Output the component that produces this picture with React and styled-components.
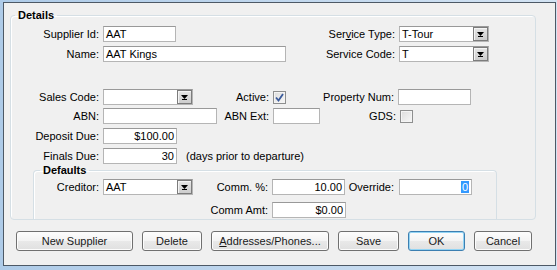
import React from 'react'
import styled, { createGlobalStyle } from 'styled-components'

const GlobalStyle = createGlobalStyle`
  html, body {
    margin: 0;
    padding: 0;
  }
  body {
    font-family: 'Liberation Sans', Arial, sans-serif;
    font-size: 11px;
    color: #000;
  }
`

const Screen = styled.div`
  width: 557px;
  height: 270px;
  box-sizing: border-box;
  padding: 2px 1px 4px 3px;
  background: linear-gradient(90deg, #aecbe8, #d3e3f3);
`

const Window = styled.div`
  height: 100%;
  box-sizing: border-box;
  display: flex;
  flex-direction: column;
  padding: 6px 0 0 6px;
  background: #f0f0f0;
  border: 1px solid #4d5966;
`

const GroupBox = styled.fieldset`
  margin: 0 0 0 ${(p) => p.$indent || 0}px;
  width: ${(p) => p.$w}px;
  box-sizing: border-box;
  padding: ${(p) => p.$pad || '0'};
  border: 1px solid #d5dfe5;
  border-bottom: ${(p) => (p.$open ? 'none' : '1px solid #d5dfe5')};
  border-radius: ${(p) => (p.$open ? '4px 4px 0 0' : '4px')};
  box-shadow: inset 1px 1px 0 #fff;
  display: flex;
  flex-direction: column;
`

const Legend = styled.legend`
  margin-left: ${(p) => p.$offset}px;
  padding: 0 3px;
  font-weight: bold;
  line-height: 13px;
`

const Row = styled.div`
  display: flex;
  align-items: center;
  height: 16px;
  margin-top: ${(p) => p.$mt || 0}px;
`

const Label = styled.div`
  flex: none;
  width: ${(p) => p.$w}px;
  box-sizing: border-box;
  padding-right: ${(p) => p.$gap || 4}px;
  text-align: right;
  white-space: nowrap;
`

const TextBox = styled.div`
  flex: none;
  width: ${(p) => p.$w}px;
  height: 16px;
  box-sizing: border-box;
  padding: 0 2px;
  display: flex;
  align-items: center;
  justify-content: ${(p) => (p.$right ? 'flex-end' : 'flex-start')};
  background: #fff;
  border: 1px solid #b5b5b5;
  border-top-color: #999;
  white-space: nowrap;
  overflow: hidden;
`

const Selected = styled.span`
  background: #3399ff;
  color: #fff;
  padding: 0 1px;
  line-height: 12px;
`

const ComboBox = styled.div`
  flex: none;
  width: ${(p) => p.$w}px;
  height: 16px;
  box-sizing: border-box;
  display: flex;
  align-items: stretch;
  background: #fff;
  border: 1px solid #b5b5b5;
  border-top-color: #999;
`

const ComboText = styled.div`
  flex: 1;
  display: flex;
  align-items: center;
  padding-left: 2px;
`

const DropButton = styled.div`
  flex: none;
  width: 15px;
  box-sizing: border-box;
  margin: 0 0 0 0;
  display: flex;
  align-items: center;
  justify-content: center;
  background: linear-gradient(#e6e6e6, #cdcdcd);
  border: 1px solid #7c7c7c;
  box-shadow: inset 1px 1px 0 #f4f4f4;
`

const CheckBox = styled.div`
  flex: none;
  width: 13px;
  height: 13px;
  box-sizing: border-box;
  display: flex;
  align-items: center;
  justify-content: center;
  border: 1px solid #8e8f8f;
  background: linear-gradient(135deg, #dcdcdc, #f8f8f8);
  box-shadow: inset 0 0 0 1px #f4f4f4;
`

const Note = styled.div`
  margin-left: 9px;
  white-space: nowrap;
`

const ButtonBar = styled.div`
  display: flex;
  gap: 9px;
  margin-top: 11px;
  padding-left: 6px;
`

const Button = styled.div`
  flex: none;
  width: ${(p) => p.$w}px;
  height: 20px;
  box-sizing: border-box;
  display: flex;
  align-items: center;
  justify-content: center;
  border: 1px solid ${(p) => (p.$focus ? '#3c7fb1' : '#707070')};
  border-radius: 3px;
  background: linear-gradient(#fdfdfd, #f3f3f3 50%, #e9e9e9 50%, #e0e0e0);
  box-shadow: inset 0 0 0 1px ${(p) => (p.$focus ? '#93d4f4' : '#fcfcfc')};
  color: #1a1a1a;
`

const Arrow = () => (
  <svg width="7" height="5" viewBox="0 0 7 5">
    <polygon points="0,0 7,0 3.5,4" fill="#000" />
    <rect x="1" y="4" width="5" height="1" fill="#000" />
  </svg>
)

const Check = () => (
  <svg width="9" height="9" viewBox="0 0 9 9">
    <path d="M1 4.5 L3.5 7.5 L8 1" fill="none" stroke="#3b5b9b" strokeWidth="1.8" />
  </svg>
)

const Combo = ({ w, value }) => (
  <ComboBox $w={w}>
    <ComboText>{value}</ComboText>
    <DropButton>
      <Arrow />
    </DropButton>
  </ComboBox>
)

export default function App() {
  return (
    <>
      <GlobalStyle />
      <Screen>
        <Window>
          <GroupBox $w={526} $pad="4px 0 0 0">
            <Legend $offset={4}>Details</Legend>
            <Row>
              <Label $w={92}>Supplier Id:</Label>
              <TextBox $w={73}>AAT</TextBox>
              <Label $w={223}>
                Ser<u>v</u>ice Type:
              </Label>
              <Combo w={90} value="T-Tour" />
            </Row>
            <Row $mt={4}>
              <Label $w={92}>Name:</Label>
              <TextBox $w={183}>AAT Kings</TextBox>
              <Label $w={113}>Service Code:</Label>
              <Combo w={90} value="T" />
            </Row>
            <Row $mt={27}>
              <Label $w={92}>Sales Code:</Label>
              <Combo w={90} value="" />
              <Label $w={80}>Active:</Label>
              <CheckBox>
                <Check />
              </CheckBox>
              <Label $w={112}>Property Num:</Label>
              <TextBox $w={73} />
            </Row>
            <Row $mt={3}>
              <Label $w={92}>ABN:</Label>
              <TextBox $w={114} />
              <Label $w={56}>ABN Ext:</Label>
              <TextBox $w={47} />
              <Label $w={80}>GDS:</Label>
              <CheckBox />
            </Row>
            <Row $mt={4}>
              <Label $w={92}>Deposit Due:</Label>
              <TextBox $w={74} $right>
                $100.00
              </TextBox>
            </Row>
            <Row $mt={4}>
              <Label $w={92}>Finals Due:</Label>
              <TextBox $w={74} $right>
                30
              </TextBox>
              <Note>(days prior to departure)</Note>
            </Row>
            <GroupBox $w={464} $indent={22} $open $pad="2px 0 1px 0">
              <Legend $offset={6}>Defaults</Legend>
              <Row>
                <Label $w={69}>Creditor:</Label>
                <Combo w={90} value="AAT" />
                <Label $w={79}>Comm. %:</Label>
                <TextBox $w={73} $right>
                  10.00
                </TextBox>
                <Label $w={54} $gap={5}>
                  Override:
                </Label>
                <TextBox $w={73} $right>
                  <Selected>0</Selected>
                </TextBox>
              </Row>
              <Row $mt={7}>
                <Label $w={238}>Comm Amt:</Label>
                <TextBox $w={74} $right>
                  $0.00
                </TextBox>
              </Row>
            </GroupBox>
          </GroupBox>
          <ButtonBar>
            <Button $w={117}>New Supplier</Button>
            <Button $w={60}>Delete</Button>
            <Button $w={118}>
              <u>A</u>ddresses/Phones...
            </Button>
            <Button $w={61}>Save</Button>
            <Button $w={57} $focus>
              OK
            </Button>
            <Button $w={58}>Cancel</Button>
          </ButtonBar>
        </Window>
      </Screen>
    </>
  )
}
